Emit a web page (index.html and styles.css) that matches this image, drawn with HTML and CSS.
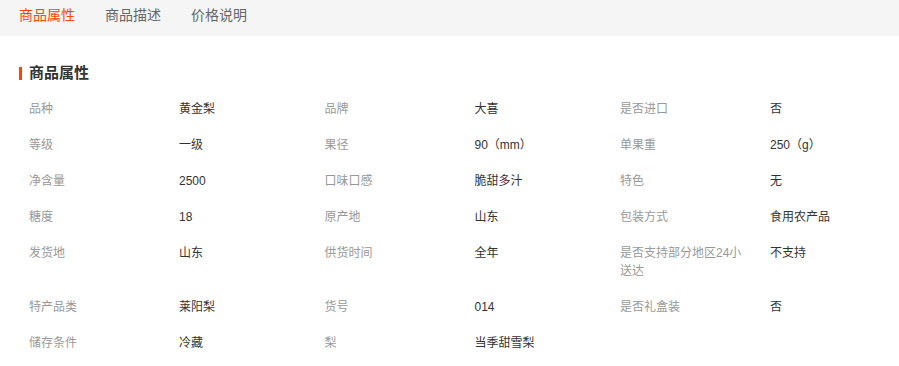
FILE: index.html
```html
<!DOCTYPE html>
<html lang="zh-CN">
<head>
<meta charset="utf-8">
<title>商品属性</title>
<link rel="stylesheet" href="styles.css">
</head>
<body>
<nav class="tabs">
  <a class="tab active">商品属性</a>
  <a class="tab">商品描述</a>
  <a class="tab">价格说明</a>
</nav>
<section class="attrs">
  <h2 class="title">商品属性</h2>
  <ul class="grid">
    <li class="item"><span class="label">品种</span><span class="value">黄金梨</span></li>
    <li class="item"><span class="label">品牌</span><span class="value">大喜</span></li>
    <li class="item"><span class="label">是否进口</span><span class="value">否</span></li>
    <li class="item"><span class="label">等级</span><span class="value">一级</span></li>
    <li class="item"><span class="label">果径</span><span class="value">90（mm）</span></li>
    <li class="item"><span class="label">单果重</span><span class="value">250（g）</span></li>
    <li class="item"><span class="label">净含量</span><span class="value">2500</span></li>
    <li class="item"><span class="label">口味口感</span><span class="value">脆甜多汁</span></li>
    <li class="item"><span class="label">特色</span><span class="value">无</span></li>
    <li class="item"><span class="label">糖度</span><span class="value">18</span></li>
    <li class="item"><span class="label">原产地</span><span class="value">山东</span></li>
    <li class="item"><span class="label">包装方式</span><span class="value">食用农产品</span></li>
    <li class="item"><span class="label">发货地</span><span class="value">山东</span></li>
    <li class="item"><span class="label">供货时间</span><span class="value">全年</span></li>
    <li class="item"><span class="label">是否支持部分地区24小送达</span><span class="value">不支持</span></li>
    <li class="item"><span class="label">特产品类</span><span class="value">莱阳梨</span></li>
    <li class="item"><span class="label">货号</span><span class="value">014</span></li>
    <li class="item"><span class="label">是否礼盒装</span><span class="value">否</span></li>
    <li class="item"><span class="label">储存条件</span><span class="value">冷藏</span></li>
    <li class="item"><span class="label">梨</span><span class="value">当季甜雪梨</span></li>
  </ul>
</section>
</body>
</html>
```

FILE: styles.css
```css
* { box-sizing: border-box; }
body {
  margin: 0;
  background: #fff;
  font-family: "Liberation Sans", "Noto Sans CJK SC", sans-serif;
  color: #333;
}
.tabs {
  display: flex;
  gap: 30px;
  height: 36px;
  padding: 0 19px;
  align-items: center;
  background: #f5f5f5;
}
.tab {
  font-size: 14px;
  line-height: 20px;
  color: #666;
  padding-bottom: 6px;
}
.tab.active { color: #ff4400; }
.attrs {
  padding: 27px 19px 0;
}
.title {
  margin: 0;
  display: flex;
  align-items: center;
  gap: 7px;
  font-size: 15px;
  line-height: 20px;
  font-weight: bold;
  color: #333;
}
.title::before {
  content: "";
  width: 3px;
  height: 13px;
  background: #ff4400;
}
.grid {
  list-style: none;
  margin: 8px 0 0 10px;
  padding: 0;
  display: grid;
  grid-template-columns: repeat(3, 295.5px);
}
.item {
  display: flex;
  padding: 9px 0;
  font-size: 12px;
  line-height: 18px;
}
.label {
  width: 150px;
  padding-right: 24px;
  flex-shrink: 0;
  color: #999;
}
.value {
  color: #333;
}
```
